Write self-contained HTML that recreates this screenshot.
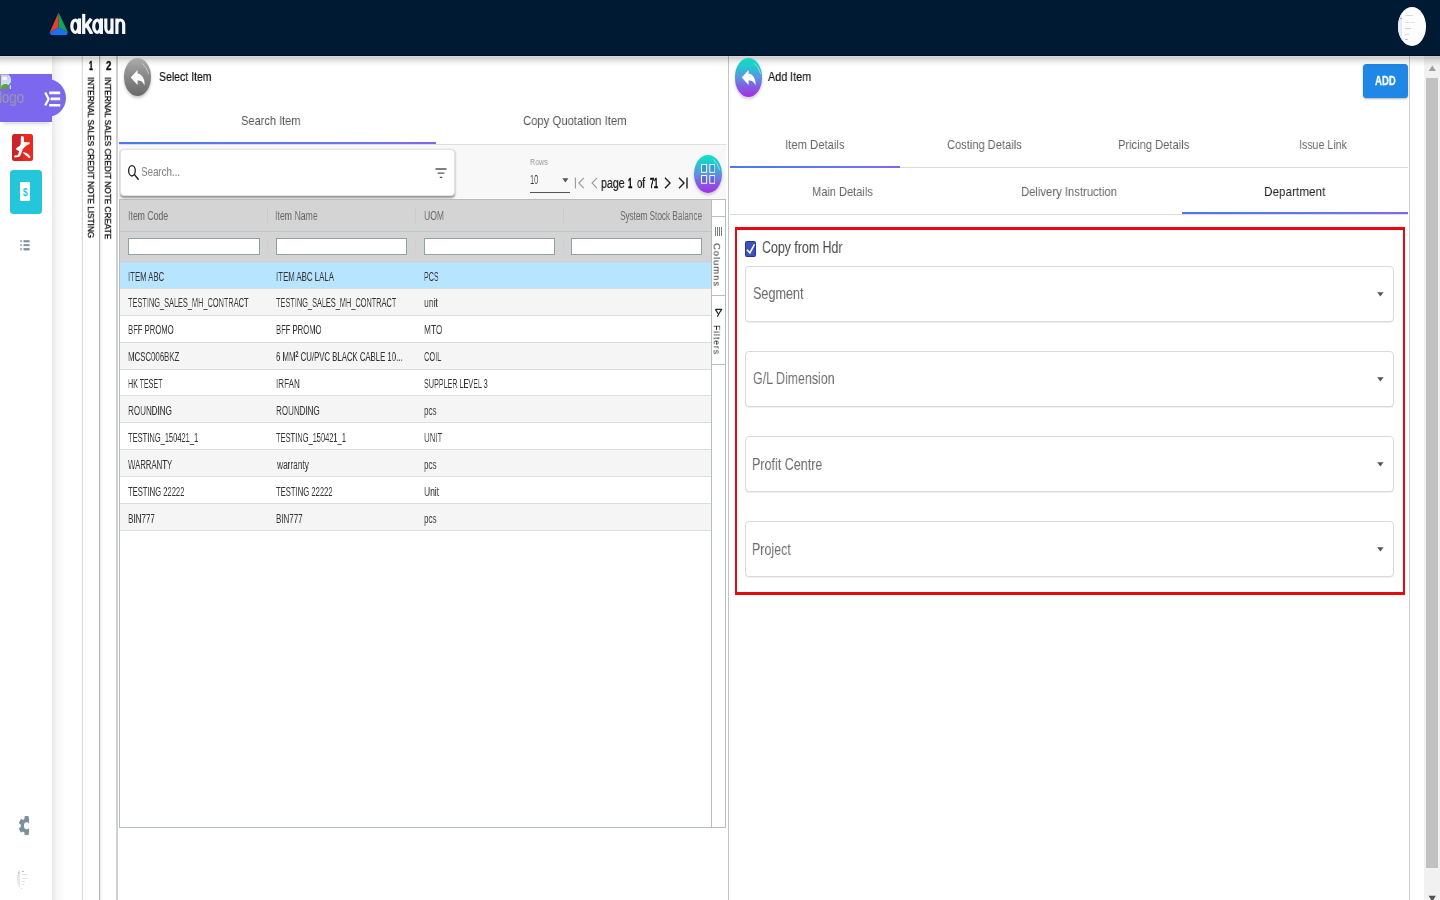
<!DOCTYPE html>
<html lang="en"><head><meta charset="utf-8"><title>akaun - Internal Sales Credit Note</title>
<style>
html,body{margin:0;padding:0;}
body{width:1440px;height:900px;overflow:hidden;position:relative;background:#fff;font-family:"Liberation Sans",sans-serif;}
div,span,svg{position:absolute;box-sizing:border-box;}
.t{white-space:nowrap;line-height:1;transform-origin:0 50%;will-change:transform;font-family:"Liberation Sans",sans-serif;}

</style></head>
<body>
<!-- header -->
<div style="left:0;top:0;width:1440px;height:56px;background:#011a33;border-bottom:1px solid #000a20;z-index:20"></div>
<div style="left:0;top:56px;width:1440px;height:11px;z-index:19;background:linear-gradient(180deg,rgba(0,0,0,.13) 0,rgba(0,0,0,.185) 14%,rgba(0,0,0,.17) 22%,rgba(0,0,0,.085) 45%,rgba(0,0,0,.03) 72%,rgba(0,0,0,0) 100%)"></div>
<svg style="left:49px;top:12px;z-index:21" width="20" height="24" viewBox="0 0 20 24">
<polygon points="9.6,0.6 0.6,20.6 9.6,15.6" fill="#e8412a"/>
<polygon points="9.6,0.6 19,20.6 9.6,15.6" fill="#15a35b"/>
<polygon points="9.6,15.6 0.6,20.6 2,23 17.6,23 19,20.6" fill="#1d6ff2"/>
</svg>
<svg style="z-index:21;left:68px;top:10px" width="60" height="24.05" viewBox="68 10 60 24.05"><g fill="none" stroke="#f7f7f7" stroke-width="3.2">
<ellipse cx="75.3" cy="26.2" rx="3.5" ry="6.1"/><path d="M79.5 18.4V34"/>
<path d="M83.7 13.9V34"/><path d="M84.8 27.2L91.2 18.8" stroke-width="3.4"/><path d="M86.6 24.8L91.8 34" stroke-width="3.4"/>
<ellipse cx="97.2" cy="26.2" rx="3.5" ry="6.1"/><path d="M101.4 18.4V34"/>
<path d="M105.8 18.4V27.4A3.1 5 0 0 0 112 27.4M112 18.4V34"/>
<path d="M116.9 18.4V34M116.9 25A3.4 5 0 0 1 123.7 25V34"/>
</g></svg>
<div style="z-index:21;left:1397.8px;top:6.5px;width:28.2px;height:39px;border-radius:50%;background:#fdfdfe;overflow:hidden"><div style="left:0;top:0;width:4.5px;height:39px;background:#e6e9f6"></div><div style="left:2px;top:11px;width:2px;height:1.4px;background:#e88"></div><div style="left:7.5px;top:8.5px;width:8px;height:1.2px;background:#dadada"></div><div style="left:7.5px;top:15px;width:10px;height:1.2px;background:#e4e4e4"></div><div style="left:7.5px;top:21.5px;width:6px;height:1.2px;background:#dccfc0"></div><div style="left:7.5px;top:27.5px;width:3.5px;height:1.2px;background:#d8d8d8"></div><div style="left:7.5px;top:32.5px;width:3px;height:1.2px;background:#a8c8f5"></div></div>
<!-- sidebar -->
<div style="left:52px;top:56px;width:13px;height:844px;background:linear-gradient(90deg,#e9e9e9,#f6f6f6 35%,#fff)"></div>
<div style="left:0;top:56px;width:52px;height:844px;background:#fff"></div>
<div style="left:28px;top:78.5px;width:38.2px;height:38.6px;border-radius:50%;background:#7b68ee"></div>
<div style="left:0;top:74px;width:52.2px;height:48px;background:#7b68ee;box-shadow:0 5px 4px -3px rgba(0,0,0,.16)"></div>
<span class="t" style="left:-0.52px;top:89.0px;font-size:16.2px;color:#9c9aa6;transform:scaleX(0.8209);">logo</span>
<svg style="left:44px;top:90px" width="17" height="18" viewBox="0 0 17 18"><g stroke="#fff" fill="none" stroke-width="2">
<path d="M5.2 2.9H16.2M6.6 8.9H16.2M5.2 15.2H16.2" stroke-width="2.6"/><path d="M1.2 2.4L4.6 8.9L1.2 15.6" stroke-width="2.2"/></g></svg>
<svg style="left:0;top:74px" width="11" height="15" viewBox="0 0 11 15"><path d="M0 0.5H8L11 4V15H0Z" fill="#cfdcf3"/><ellipse cx="4.6" cy="4.6" rx="2.6" ry="1.5" fill="#f4f8ff"/><path d="M8 0.5V4H11Z" fill="#fff" stroke="#a8a8a8" stroke-width=".6"/><path d="M0.5 0.5V15" stroke="#8e8e8e" stroke-width="1.1"/><path d="M0 0.8H8" stroke="#a8a8a8" stroke-width=".6"/><ellipse cx="5.4" cy="14.4" rx="4.6" ry="4.4" fill="#58a82e"/><path d="M6.2 15.4L11.4 8.6" stroke="#7b68ee" stroke-width="1.5"/></svg>
<div style="left:12px;top:133.8px;width:20.9px;height:27.3px;border-radius:2.5px;background:linear-gradient(90deg,#cb2228 0,#d0232a 48%,#e72a20 54%,#ea2a1e 100%)"></div>
<svg style="left:12px;top:133.8px" width="20.9" height="27.3" viewBox="0 0 20.9 27.3"><path fill="#fff" d="M9.2 2L11.9 2.8L12.1 7.9L17.8 8.6L17.6 9.9Q15 10.8 13.6 12.3Q11.6 14 10.6 15.6L9.9 17.8L8.8 20.7Q8.2 22.2 7 22.9L2.6 23.5L1.8 22.5L3.3 21.3L5.1 21.5Q6.2 20.6 6.6 19.2L7 17L4.8 15.9L3.7 14.8L5.1 13.4L7.7 11.9Q8.6 10.8 8.8 9.3L8.8 4.6Z"/><path fill="#fff" d="M10.6 18.3Q12.6 18.2 14.3 18.9Q16.2 19.8 17.2 21.1L18.7 23.6L16.9 24Q15.6 22.6 13.9 21.4Q12.4 20.2 11.4 19.3Z"/></svg>
<div style="left:10.4px;top:170px;width:31.6px;height:43.6px;border-radius:3.5px;background:#26c6da"></div>
<div style="left:20px;top:182px;width:9.5px;height:18.8px;border-radius:1.2px;background:#fff"></div>
<span class="t" style="left:23.30px;top:187.1px;font-size:10.5px;color:#26c6da;font-weight:700;transform:scaleX(0.8500);">$</span>
<svg style="left:19.5px;top:239.5px" width="10" height="11" viewBox="0 0 10 11"><g fill="#7d919e"><rect x="0.3" y="0.2" width="1.3" height="2.1"/><rect x="3.5" y="0.2" width="6.1" height="2.1"/><rect x="0.3" y="4.2" width="1.3" height="1.9"/><rect x="3.5" y="4.2" width="6.1" height="1.9"/><rect x="0.3" y="8.1" width="1.3" height="2.3"/><rect x="3.5" y="8.1" width="6.1" height="2.3"/></g></svg>
<div style="left:18.8px;top:815.8px;width:10.5px;height:19.6px;overflow:hidden"><svg style="left:0;top:0" width="15.4" height="19.5" viewBox="2.2 0 19.6 20" preserveAspectRatio="none"><path fill="#7c909c" d="M19.4 11c.04-.3.06-.66.06-1s-.02-.7-.07-1l2.1-1.65c.2-.15.25-.42.13-.64l-2-3.46c-.12-.22-.38-.3-.6-.22l-2.5 1a7.3 7.3 0 0 0-1.7-1L14.4.4a.5.5 0 0 0-.5-.4h-4a.5.5 0 0 0-.5.4l-.36 2.63c-.6.25-1.17.6-1.7 1l-2.48-1c-.23-.1-.5 0-.6.22l-2 3.46c-.14.22-.08.5.1.64L4.5 9c-.05.3-.07.67-.07 1s.02.7.07 1l-2.1 1.65c-.2.15-.25.42-.13.64l2 3.46c.12.22.38.3.6.22l2.5-1c.52.4 1.08.73 1.7 1l.37 2.63c.04.24.25.4.5.4h4c.25 0 .46-.16.5-.4l.37-2.63c.6-.25 1.17-.6 1.7-1l2.48 1c.23.1.5 0 .6-.22l2-3.46c.13-.22.08-.5-.1-.64L19.4 11zM12 13.5a3.5 3.5 0 1 1 0-7 3.5 3.5 0 0 1 0 7z"/></svg></div>
<div style="left:17px;top:868px;width:13px;height:21.5px;border-radius:50%;overflow:hidden;background:#fff"><div style="left:0;top:0;width:2.6px;height:22px;background:#e3e6f3"></div><div style="left:1.2px;top:4.4px;width:1.3px;height:1.6px;background:#e9a0a0"></div><div style="left:4.5px;top:3.4px;width:2px;height:.9px;background:#bbb"></div><div style="left:4.5px;top:6px;width:5px;height:.9px;background:#e2e2e2"></div><div style="left:4.5px;top:9.6px;width:6px;height:.9px;background:#e6e6e6"></div><div style="left:4.5px;top:13px;width:3px;height:.9px;background:#ecdcd6"></div><div style="left:4.5px;top:16px;width:2px;height:.9px;background:#e2e2e2"></div><div style="left:4px;top:19.5px;width:1.4px;height:1.6px;background:#c6dcfa"></div></div>
<!-- vertical tabs -->
<div style="left:82px;top:56px;width:1px;height:844px;background:#dcdcdc"></div>
<div style="left:99px;top:56px;width:1px;height:844px;background:#b8b8b8"></div>
<div style="left:100px;top:56px;width:1.5px;height:844px;background:linear-gradient(90deg,#e6e6e6,#fff)"></div>
<div style="left:80.5px;top:56px;width:1.5px;height:844px;background:linear-gradient(90deg,#fff,#efefef)"></div>
<div style="left:116px;top:56px;width:2px;height:844px;background:#d0d0d0"></div>
<span class="t" style="left:88.50px;top:60.2px;font-size:12px;color:#111;font-weight:700;transform:scaleX(0.5857);-webkit-text-stroke:.5px #111;">1</span>
<span class="t" style="left:105.90px;top:60.2px;font-size:12px;color:#111;font-weight:700;transform:scaleX(0.7857);-webkit-text-stroke:.4px #111;">2</span>
<span class="t" style="left:94.08px;top:76.70px;font-size:10px;color:#111;transform-origin:0 0;transform:rotate(90deg) scale(0.8221,0.7681);-webkit-text-stroke:.35px #111;">INTERNAL SALES CREDIT NOTE LISTING</span>
<span class="t" style="left:111.28px;top:76.70px;font-size:10px;color:#111;transform-origin:0 0;transform:rotate(90deg) scale(0.8234,0.7681);-webkit-text-stroke:.35px #111;">INTERNAL SALES CREDIT NOTE CREATE</span>
<!-- page scrollbar -->
<div style="left:1424px;top:56px;width:16px;height:844px;background:#f1f1f1"></div>
<div style="left:1426.1px;top:78px;width:12.2px;height:789.8px;background:#c1c1c1"></div>
<svg style="left:1424px;top:56px" width="16" height="17" viewBox="0 0 16 17"><path d="M4.7 15.1L8.3 9.4L11.9 15.1Z" fill="#a0a0a0"/></svg>
<svg style="left:1424px;top:883px" width="16" height="17" viewBox="0 0 16 17"><path d="M4.6 12.8H11.9L8.25 18.4Z" fill="#505050"/></svg>
<!-- left panel -->
<div style="z-index:22;left:124px;top:58.3px;width:27px;height:37.6px;border-radius:50%;background:linear-gradient(180deg,#acacac,#8a8a8a 45%,#6a6a6a);box-shadow:0 2px 3px rgba(0,0,0,.22)"></div>
<svg style="z-index:23;left:129.7px;top:69px" width="16" height="18" viewBox="0 0 16 18"><path d="M7.6 0.9L0.7 8.5L7.6 16.1V11.4C10.8 11.4 13 12.6 14.6 16.5C15 10.4 12.4 5.4 7.6 4.6Z" fill="#fbfbfb"/></svg>
<svg style="z-index:23;left:141.8px;top:62.5px" width="8" height="12" viewBox="0 0 8 12"><path d="M0.6 0.6Q4.8 4 6.6 10.6" fill="none" stroke="rgba(255,255,255,.5)" stroke-width=".9" stroke-linecap="round"/></svg>
<span class="t" style="left:158.60px;top:69.9px;font-size:13.4px;color:#111;transform:scaleX(0.7841);-webkit-text-stroke:.2px #111;">Select Item</span>
<span class="t" style="left:241.30px;top:113.9px;font-size:13.4px;color:#555;transform:scaleX(0.8246);">Search Item</span>
<span class="t" style="left:522.80px;top:113.9px;font-size:13.4px;color:#555;transform:scaleX(0.8430);">Copy Quotation Item</span>
<div style="left:119px;top:143.5px;width:607px;height:1px;background:#dedede"></div>
<div style="left:119px;top:142.1px;width:317px;height:2px;background:linear-gradient(90deg,#4a7be8,#6f74ee 80%,#8a63ea)"></div>
<div style="left:119px;top:144.5px;width:607px;height:54.5px;background:#f8f8f8"></div>
<div style="left:119.8px;top:149.3px;width:335.6px;height:46.4px;background:#fff;border-radius:4px;border:1px solid #e3e3e3;box-shadow:0 1.2px 2.2px rgba(0,0,0,.4)"></div>
<svg style="left:127px;top:164px" width="13" height="17" viewBox="0 0 13 17"><ellipse cx="4.95" cy="6.85" rx="3.3" ry="5.15" fill="none" stroke="#1c1c1c" stroke-width="1.3"/><path d="M7.3 10.4L11.2 15.2" stroke="#1c1c1c" stroke-width="1.45" stroke-linecap="round"/></svg>
<span class="t" style="left:140.70px;top:165.4px;font-size:13.4px;color:#858585;transform:scaleX(0.7282);">Search...</span>
<svg style="left:434.5px;top:167.5px" width="12" height="11" viewBox="0 0 12 11"><path d="M0.5 1H11.5M2.6 5.2H9.4M4.8 9.4H7.2" stroke="#555" stroke-width="1.3"/></svg>
<span class="t" style="left:529.60px;top:158.4px;font-size:8.5px;color:#9a9a9a;transform:scaleX(0.8379);">Rows</span>
<span class="t" style="left:529.80px;top:174.4px;font-size:12.8px;color:#333;transform:scaleX(0.5809);">10</span>
<svg style="left:561.5px;top:178px" width="7" height="5" viewBox="0 0 7 5"><path d="M0.3 0.3H6.4L3.35 4.6Z" fill="#555"/></svg>
<div style="left:529.5px;top:191.8px;width:40.3px;height:1px;background:#555"></div>
<svg style="left:573.5px;top:177px" width="12" height="12" viewBox="0 0 12 12"><path d="M1.4 0.6V11.4" stroke="#999" stroke-width="1.1" fill="none"/><path d="M9.8 0.8L4.8 6L9.8 11.2" stroke="#999" stroke-width="1.1" fill="none"/></svg>
<svg style="left:590px;top:177px" width="9" height="12" viewBox="0 0 9 12"><path d="M7 0.8L2 6L7 11.2" stroke="#999" stroke-width="1.1" fill="none"/></svg>
<span class="t" style="left:601.40px;top:175.6px;font-size:14px;color:#1a1a1a;transform:scaleX(0.7590);-webkit-text-stroke:.2px #222;">page</span>
<span class="t" style="left:627.50px;top:174.6px;font-size:15.2px;color:#111;font-weight:700;transform:scaleX(0.5000);-webkit-text-stroke:.55px #111;">1</span>
<span class="t" style="left:636.90px;top:175.6px;font-size:14px;color:#1a1a1a;transform:scaleX(0.6872);-webkit-text-stroke:.2px #222;">of</span>
<span class="t" style="left:650.20px;top:174.6px;font-size:15.2px;color:#111;font-weight:700;transform:scaleX(0.4643);-webkit-text-stroke:.45px #111;">71</span>
<svg style="left:663px;top:177px" width="9" height="12" viewBox="0 0 9 12"><path d="M2 0.8L7 6L2 11.2" stroke="#222" stroke-width="1.4" fill="none"/></svg>
<svg style="left:676.5px;top:177px" width="12" height="12" viewBox="0 0 12 12"><path d="M2 0.8L7 6L2 11.2" stroke="#222" stroke-width="1.4" fill="none"/><path d="M10 0.6V11.4" stroke="#222" stroke-width="1.4" fill="none"/></svg>
<div style="z-index:22;left:693.9px;top:154.5px;width:28.2px;height:38.8px;border-radius:50%;background:linear-gradient(180deg,#10e4c2 0%,#22c8d0 22%,#5a94e0 50%,#8060e0 72%,#a52ee6 100%);box-shadow:0 2px 3px rgba(0,0,0,.2)"></div>
<svg style="z-index:23;left:700.8px;top:164.1px" width="14.4" height="19.8" viewBox="0 0 14.4 19.8"><g fill="rgba(20,30,160,.16)" stroke="#f4f4ff" stroke-width="1.05"><rect x="0.5" y="0.5" width="5.1" height="7.8"/><rect x="8.8" y="0.5" width="5.1" height="7.8"/><rect x="0.5" y="11.5" width="5.1" height="7.8"/><rect x="8.8" y="11.5" width="5.1" height="7.8"/></g></svg>
<svg style="z-index:23;left:713.0px;top:159px" width="8" height="12" viewBox="0 0 8 12"><path d="M0.6 0.6Q4.8 4 6.6 10.6" fill="none" stroke="rgba(255,255,255,.5)" stroke-width=".9" stroke-linecap="round"/></svg>
<!-- grid -->
<div style="left:119px;top:199px;width:606.8px;height:629px;border:1px solid #b3bec6;background:#fff"></div>
<div style="left:120px;top:200px;width:591px;height:62.4px;background:#d4d4d4"></div>
<div style="left:120px;top:231px;width:591px;height:1px;background:#bcc6cc"></div>
<div style="left:120px;top:261px;width:591px;height:1px;background:#cfd2d4"></div>
<div style="left:267.3px;top:207px;width:1px;height:16px;background:#c6cbcf"></div>
<div style="left:267.3px;top:238px;width:1px;height:16px;background:#ccd0d3"></div>
<div style="left:415.4px;top:207px;width:1px;height:16px;background:#c6cbcf"></div>
<div style="left:415.4px;top:238px;width:1px;height:16px;background:#ccd0d3"></div>
<div style="left:562.8px;top:207px;width:1px;height:16px;background:#c6cbcf"></div>
<div style="left:562.8px;top:238px;width:1px;height:16px;background:#ccd0d3"></div>
<span class="t" style="left:127.68px;top:209.7px;font-size:12px;color:#6a6a6a;transform:scaleX(0.7241);">Item Code</span>
<span class="t" style="left:275.47px;top:209.7px;font-size:12px;color:#6a6a6a;transform:scaleX(0.7275);">Item Name</span>
<span class="t" style="left:423.80px;top:209.7px;font-size:12px;color:#6a6a6a;transform:scaleX(0.7143);">UOM</span>
<span class="t" style="left:620.00px;top:209.7px;font-size:12px;color:#6a6a6a;transform:scaleX(0.6828);">System Stock Balance</span>
<div style="left:128px;top:238px;width:131.8px;height:16.8px;background:#fff;border:1px solid #8fa3a4"></div>
<div style="left:275.8px;top:238px;width:131.6px;height:16.8px;background:#fff;border:1px solid #8fa3a4"></div>
<div style="left:423.8px;top:238px;width:131.2px;height:16.8px;background:#fff;border:1px solid #8fa3a4"></div>
<div style="left:571.2px;top:238px;width:130.6px;height:16.8px;background:#fff;border:1px solid #8fa3a4"></div>
<div style="left:120px;top:262.40px;width:591px;height:26.49px;background:#b7e4ff;border-bottom:1px solid #d9dee2"></div>
<span class="t" style="left:127.75px;top:270.5px;font-size:12px;color:#333;transform:scaleX(0.6464);">ITEM ABC</span>
<span class="t" style="left:275.55px;top:270.5px;font-size:12px;color:#333;transform:scaleX(0.6530);">ITEM ABC LALA</span>
<span class="t" style="left:423.80px;top:270.5px;font-size:12px;color:#333;transform:scaleX(0.5918);">PCS</span>
<div style="left:120px;top:288.89px;width:591px;height:26.89px;background:#f5f5f5;border-bottom:1px solid #d9dee2"></div>
<span class="t" style="left:128.40px;top:297.4px;font-size:12px;color:#333;transform:scaleX(0.6146);">TESTING_SALES_MH_CONTRACT</span>
<span class="t" style="left:276.20px;top:297.4px;font-size:12px;color:#333;transform:scaleX(0.6136);">TESTING_SALES_MH_CONTRACT</span>
<span class="t" style="left:423.80px;top:297.4px;font-size:12px;color:#333;transform:scaleX(0.7095);">unit</span>
<div style="left:120px;top:315.78px;width:591px;height:26.89px;background:#fff;border-bottom:1px solid #d9dee2"></div>
<span class="t" style="left:128.40px;top:324.3px;font-size:12px;color:#333;transform:scaleX(0.6395);">BFF PROMO</span>
<span class="t" style="left:276.20px;top:324.3px;font-size:12px;color:#333;transform:scaleX(0.6366);">BFF PROMO</span>
<span class="t" style="left:423.80px;top:324.3px;font-size:12px;color:#333;transform:scaleX(0.6971);">MTO</span>
<div style="left:120px;top:342.67px;width:591px;height:26.89px;background:#f5f5f5;border-bottom:1px solid #d9dee2"></div>
<span class="t" style="left:128.40px;top:351.2px;font-size:12px;color:#333;transform:scaleX(0.6521);">MCSC006BKZ</span>
<span class="t" style="left:276.20px;top:351.2px;font-size:12px;color:#333;transform:scaleX(0.6475);">6 MM<span style="position:relative;top:-4.2px;font-size:8.5px;line-height:0;font-weight:700">2</span> CU/PVC BLACK CABLE 10...</span>
<span class="t" style="left:423.80px;top:351.2px;font-size:12px;color:#333;transform:scaleX(0.6176);">COIL</span>
<div style="left:120px;top:369.56px;width:591px;height:26.89px;background:#fff;border-bottom:1px solid #d9dee2"></div>
<span class="t" style="left:128.40px;top:378.1px;font-size:12px;color:#333;transform:scaleX(0.5881);">HK TESET</span>
<span class="t" style="left:275.53px;top:378.1px;font-size:12px;color:#333;transform:scaleX(0.6712);">IRFAN</span>
<span class="t" style="left:423.80px;top:378.1px;font-size:12px;color:#333;transform:scaleX(0.5997);">SUPPLER LEVEL 3</span>
<div style="left:120px;top:396.45px;width:591px;height:26.89px;background:#f5f5f5;border-bottom:1px solid #d9dee2"></div>
<span class="t" style="left:128.40px;top:405.0px;font-size:12px;color:#333;transform:scaleX(0.6708);">ROUNDING</span>
<span class="t" style="left:276.20px;top:405.0px;font-size:12px;color:#333;transform:scaleX(0.6677);">ROUNDING</span>
<span class="t" style="left:423.80px;top:405.0px;font-size:12px;color:#333;transform:scaleX(0.6694);">pcs</span>
<div style="left:120px;top:423.34px;width:591px;height:26.89px;background:#fff;border-bottom:1px solid #d9dee2"></div>
<span class="t" style="left:128.40px;top:431.9px;font-size:12px;color:#333;transform:scaleX(0.6264);">TESTING_150421_1</span>
<span class="t" style="left:276.20px;top:431.9px;font-size:12px;color:#333;transform:scaleX(0.6237);">TESTING_150421_1</span>
<span class="t" style="left:423.80px;top:431.9px;font-size:12px;color:#333;transform:scaleX(0.6523);">UNIT</span>
<div style="left:120px;top:450.23px;width:591px;height:26.89px;background:#f5f5f5;border-bottom:1px solid #d9dee2"></div>
<span class="t" style="left:128.40px;top:458.8px;font-size:12px;color:#333;transform:scaleX(0.6465);">WARRANTY</span>
<span class="t" style="left:276.89px;top:458.8px;font-size:12px;color:#333;transform:scaleX(0.6934);">warranty</span>
<span class="t" style="left:423.80px;top:458.8px;font-size:12px;color:#333;transform:scaleX(0.6694);">pcs</span>
<div style="left:120px;top:477.12px;width:591px;height:26.89px;background:#fff;border-bottom:1px solid #d9dee2"></div>
<span class="t" style="left:128.40px;top:485.7px;font-size:12px;color:#333;transform:scaleX(0.6357);">TESTING 22222</span>
<span class="t" style="left:276.20px;top:485.7px;font-size:12px;color:#333;transform:scaleX(0.6380);">TESTING 22222</span>
<span class="t" style="left:423.80px;top:485.7px;font-size:12px;color:#333;transform:scaleX(0.7044);">Unit</span>
<div style="left:120px;top:504.01px;width:591px;height:26.89px;background:#f5f5f5;border-bottom:1px solid #d9dee2"></div>
<span class="t" style="left:128.40px;top:512.6px;font-size:12px;color:#333;transform:scaleX(0.6716);">BIN777</span>
<span class="t" style="left:276.20px;top:512.6px;font-size:12px;color:#333;transform:scaleX(0.6642);">BIN777</span>
<span class="t" style="left:423.80px;top:512.6px;font-size:12px;color:#333;transform:scaleX(0.6694);">pcs</span>
<div style="left:120px;top:262px;width:591px;height:1px;background:#c3dded"></div>
<div style="left:711px;top:200px;width:1px;height:627px;background:#b3bec6"></div>
<div style="left:712px;top:216px;width:13px;height:1px;background:#b3bec6"></div>
<div style="left:712px;top:295.3px;width:13px;height:1px;background:#b3bec6"></div>
<div style="left:712px;top:363.5px;width:13px;height:1px;background:#b3bec6"></div>
<div style="left:715px;top:227px;width:1px;height:9px;background:#7a7a7a"></div>
<div style="left:717px;top:227px;width:1px;height:9px;background:#7a7a7a"></div>
<div style="left:719px;top:227px;width:1px;height:9px;background:#7a7a7a"></div>
<div style="left:721px;top:227px;width:1px;height:9px;background:#7a7a7a"></div>
<span class="t" style="left:721.24px;top:243.00px;font-size:11px;color:#2a2a2a;letter-spacing:1.1px;transform-origin:0 0;transform:rotate(90deg) scale(0.8633,0.8169);">Columns</span>
<svg style="left:714px;top:308px" width="9" height="10" viewBox="0 0 9 10"><path d="M1.3 1.4H7.7L4.7 6L3.4 8.8M1.3 1.4L4.2 5.6" fill="none" stroke="#222" stroke-width="1.15" stroke-linejoin="round"/></svg>
<span class="t" style="left:721.24px;top:325.00px;font-size:11px;color:#2a2a2a;letter-spacing:1.1px;transform-origin:0 0;transform:rotate(90deg) scale(0.7964,0.8169);">Filters</span>
<div style="left:727.8px;top:56px;width:1.5px;height:844px;background:#c4c4c4"></div>
<!-- right panel -->
<div style="z-index:22;left:734.9px;top:58.2px;width:27.6px;height:38.4px;border-radius:50%;background:linear-gradient(180deg,#14dcbe 0%,#22c8d0 22%,#5a94e0 50%,#8060e0 72%,#a52ee6 100%);box-shadow:0 2px 3px rgba(0,0,0,.2)"></div>
<svg style="z-index:23;left:741px;top:69px" width="16" height="18" viewBox="0 0 16 18"><path d="M7.6 0.9L0.7 8.5L7.6 16.1V11.4C10.8 11.4 13 12.6 14.6 16.5C15 10.4 12.4 5.4 7.6 4.6Z" fill="#fbfbfb"/></svg>
<svg style="z-index:23;left:753.6px;top:62.5px" width="8" height="12" viewBox="0 0 8 12"><path d="M0.6 0.6Q4.8 4 6.6 10.6" fill="none" stroke="rgba(255,255,255,.5)" stroke-width=".9" stroke-linecap="round"/></svg>
<span class="t" style="left:767.50px;top:69.9px;font-size:13.4px;color:#111;transform:scaleX(0.8047);-webkit-text-stroke:.2px #111;">Add Item</span>
<div style="left:1362.9px;top:63.6px;width:45px;height:34px;border-radius:3.5px;background:#1f87e6;box-shadow:0 1px 2px rgba(0,0,0,.3)"></div>
<span class="t" style="left:1375.20px;top:73.7px;font-size:13.4px;color:#fff;font-weight:700;transform:scaleX(0.7157);-webkit-text-stroke:.3px #fff;">ADD</span>
<span class="t" style="left:784.66px;top:138.1px;font-size:13.4px;color:#666;transform:scaleX(0.8429);">Item Details</span>
<span class="t" style="left:947.00px;top:138.1px;font-size:13.4px;color:#666;transform:scaleX(0.8300);">Costing Details</span>
<span class="t" style="left:1118.07px;top:138.1px;font-size:13.4px;color:#666;transform:scaleX(0.8317);">Pricing Details</span>
<span class="t" style="left:1298.91px;top:138.1px;font-size:13.4px;color:#666;transform:scaleX(0.7937);">Issue Link</span>
<div style="left:730px;top:167px;width:678px;height:1px;background:#dcdcdc"></div>
<div style="left:730px;top:165.9px;width:170px;height:2px;background:linear-gradient(90deg,#4a7be8,#6f74ee 80%,#8a63ea)"></div>
<span class="t" style="left:812.17px;top:184.9px;font-size:13.4px;color:#666;transform:scaleX(0.8263);">Main Details</span>
<span class="t" style="left:1021.16px;top:184.9px;font-size:13.4px;color:#666;transform:scaleX(0.8424);">Delivery Instruction</span>
<span class="t" style="left:1264.22px;top:184.9px;font-size:13.4px;color:#222;transform:scaleX(0.8767);">Department</span>
<div style="left:730px;top:214px;width:678px;height:1px;background:#dcdcdc"></div>
<div style="left:1182px;top:212.2px;width:226px;height:2px;background:linear-gradient(90deg,#4a7be8,#6f74ee 80%,#8a63ea)"></div>
<div style="left:735px;top:226.8px;width:670.3px;height:368.2px;border:solid #e60a0e;border-width:3.2px 2.1px"></div>
<div style="left:744.8px;top:241px;width:11.1px;height:15.6px;border-radius:1.5px;background:#3f51b5;border:1px solid #1f31a8"></div>
<svg style="left:744.8px;top:241px" width="11.1" height="15.6" viewBox="0 0 11.1 15.6"><path d="M1.9 8.8L4.9 11.9L9.5 3.4" fill="none" stroke="#fff" stroke-width="1.5"/></svg>
<span class="t" style="left:761.70px;top:240.2px;font-size:16px;color:#4a4a4a;transform:scaleX(0.7737);">Copy from Hdr</span>
<div style="left:745px;top:266.2px;width:649px;height:56px;border:1px solid #dadada;border-radius:4px;background:#fff;box-shadow:0 1px 1px rgba(0,0,0,.07)"></div>
<span class="t" style="left:753.20px;top:285.1px;font-size:16.3px;color:#6c6c6c;transform:scaleX(0.7739);">Segment</span>
<svg style="left:1376.8px;top:291.9px" width="7" height="5" viewBox="0 0 7 5"><path d="M0.2 0.3H6.6L3.4 4.4Z" fill="#555"/></svg>
<div style="left:745px;top:351.2px;width:649px;height:56px;border:1px solid #dadada;border-radius:4px;background:#fff;box-shadow:0 1px 1px rgba(0,0,0,.07)"></div>
<span class="t" style="left:753.20px;top:370.1px;font-size:16.3px;color:#6c6c6c;transform:scaleX(0.7625);">G/L Dimension</span>
<svg style="left:1376.8px;top:376.9px" width="7" height="5" viewBox="0 0 7 5"><path d="M0.2 0.3H6.6L3.4 4.4Z" fill="#555"/></svg>
<div style="left:745px;top:436.2px;width:649px;height:56px;border:1px solid #dadada;border-radius:4px;background:#fff;box-shadow:0 1px 1px rgba(0,0,0,.07)"></div>
<span class="t" style="left:752.43px;top:455.6px;font-size:16.3px;color:#6c6c6c;transform:scaleX(0.7693);">Profit Centre</span>
<svg style="left:1376.8px;top:462.4px" width="7" height="5" viewBox="0 0 7 5"><path d="M0.2 0.3H6.6L3.4 4.4Z" fill="#555"/></svg>
<div style="left:745px;top:520.6px;width:649px;height:56px;border:1px solid #dadada;border-radius:4px;background:#fff;box-shadow:0 1px 1px rgba(0,0,0,.07)"></div>
<span class="t" style="left:752.44px;top:540.6px;font-size:16.3px;color:#6c6c6c;transform:scaleX(0.7637);">Project</span>
<svg style="left:1376.8px;top:547.4px" width="7" height="5" viewBox="0 0 7 5"><path d="M0.2 0.3H6.6L3.4 4.4Z" fill="#555"/></svg>
<div style="left:1409px;top:56px;width:1px;height:844px;background:#cfcfcf"></div>
</body></html>
